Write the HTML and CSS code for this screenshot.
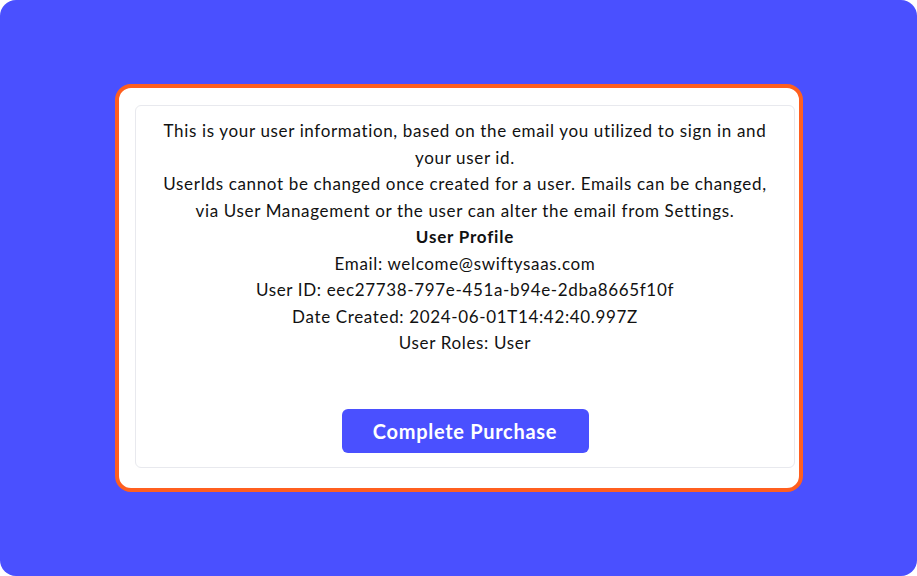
FILE: index.html
```html
<!DOCTYPE html>
<html>
<head>
<meta charset="utf-8">
<link rel="stylesheet" href="styles.css">
</head>
<body>
<div class="stage">
  <div class="frame">
    <div class="card">
      <div class="info">
        <p>This is your user information, based on the email you utilized to sign in and your user id.</p>
        <p>UserIds cannot be changed once created for a user. Emails can be changed, via User Management or the user can alter the email from Settings.</p>
        <p class="title">User Profile</p>
        <p>Email: welcome@swiftysaas.com</p>
        <p>User ID: eec27738-797e-451a-b94e-2dba8665f10f</p>
        <p>Date Created: 2024-06-01T14:42:40.997Z</p>
        <p>User Roles: User</p>
      </div>
      <button class="buy">Complete Purchase</button>
    </div>
  </div>
</div>
</body>
</html>
```
FILE: styles.css
```css
html, body {
  margin: 0;
  padding: 0;
  background: #ffffff;
}
body {
  font-family: Lato, "Open Sans", sans-serif;
  color: #111111;
}
.stage {
  width: 917px;
  height: 576px;
  box-sizing: border-box;
  background: #4a50ff;
  border-radius: 16px;
  display: flex;
  align-items: flex-start;
  justify-content: flex-start;
  padding: 84px 0 0 115px;
}
.frame {
  width: 688px;
  height: 408px;
  box-sizing: border-box;
  background: #ffffff;
  border: 4px solid #ff5f1f;
  border-radius: 16px;
  padding: 17px 4px 20px 16px;
}
.card {
  box-sizing: border-box;
  height: 363px;
  border: 1px solid #e8e9ee;
  border-radius: 6px;
  display: flex;
  flex-direction: column;
  align-items: center;
  padding: 12px 18px 14px;
}
.info {
  width: 622px;
  text-align: center;
  font-size: 17px;
  line-height: 26.5px;
  letter-spacing: 0.65px;
  flex: 1;
}
.info p {
  margin: 0;
}
.info .title {
  font-weight: 700;
  letter-spacing: 0.8px;
}
.buy {
  width: 247px;
  height: 44px;
  border: none;
  border-radius: 6px;
  background: #4a50ff;
  color: #ffffff;
  font-family: Lato, "Open Sans", sans-serif;
  font-size: 20px;
  font-weight: 700;
  letter-spacing: 0.7px;
  padding: 0;
}
```
